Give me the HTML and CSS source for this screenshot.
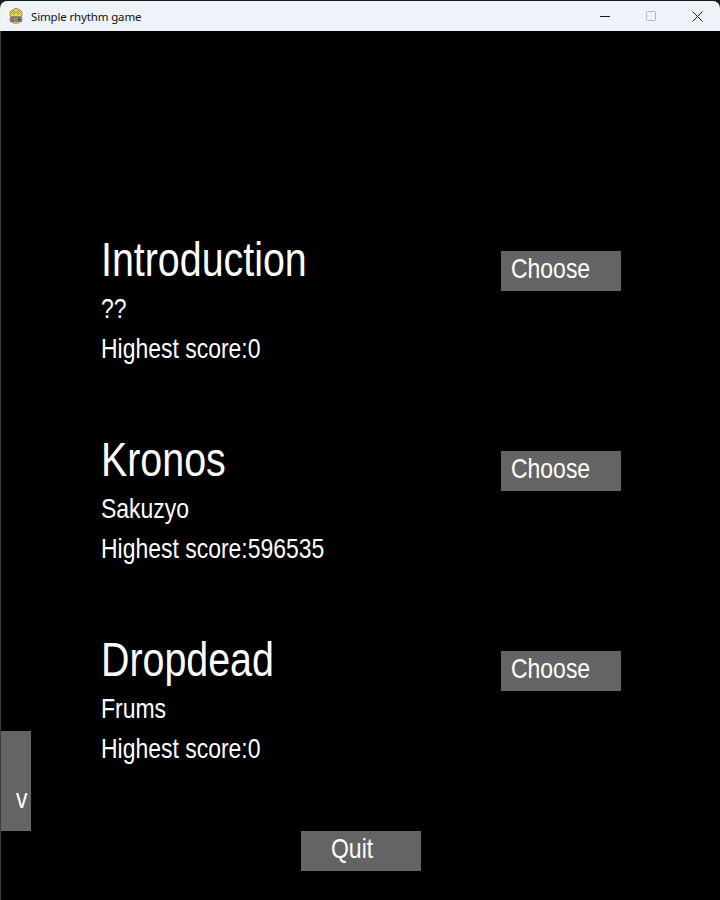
FILE: index.html
```html
<!DOCTYPE html>
<html lang="en">
<head>
<meta charset="utf-8">
<title>Simple rhythm game</title>
<link rel="stylesheet" href="styles.css">
</head>
<body>
<div class="window">
  <header class="titlebar">
    <svg class="app-icon" width="16" height="17" viewBox="0 0 16 17">
      <path d="M3 9 C1 6 2 2 5 2 C6 0 10 0 11 2 C14 2 15 6 13 9 Z" fill="#f2d53c" stroke="#8a7410" stroke-width="0.8"/>
      <circle cx="5.5" cy="4.5" r="1.6" fill="#fff" stroke="#555" stroke-width="0.5"/>
      <circle cx="10.5" cy="4.5" r="1.6" fill="#fff" stroke="#555" stroke-width="0.5"/>
      <circle cx="5.7" cy="4.6" r="0.6" fill="#222"/>
      <circle cx="10.3" cy="4.6" r="0.6" fill="#222"/>
      <rect x="2" y="9" width="12" height="5" rx="2" fill="#8c8c8c" stroke="#444" stroke-width="0.6"/>
      <circle cx="5" cy="11.5" r="1.1" fill="#d33"/>
      <circle cx="11" cy="11.5" r="1.1" fill="#333"/>
      <path d="M4 14 C5 16 11 16 12 14" fill="#f2d53c" stroke="#8a7410" stroke-width="0.6"/>
    </svg>
    <span class="title">Simple rhythm game</span>
    <div class="controls">
      <span class="ctl">
        <svg width="10" height="10" viewBox="0 0 10 10"><path d="M0 5.5 H10" stroke="#1a1a1a" stroke-width="1"/></svg>
      </span>
      <span class="ctl">
        <svg width="10" height="10" viewBox="0 0 10 10"><rect x="0.5" y="0.5" width="9" height="9" rx="1" fill="none" stroke="#b8b8b8" stroke-width="1"/></svg>
      </span>
      <span class="ctl">
        <svg width="11" height="11" viewBox="0 0 11 11"><path d="M0.5 0.5 L10.5 10.5 M10.5 0.5 L0.5 10.5" stroke="#1a1a1a" stroke-width="1"/></svg>
      </span>
    </div>
  </header>
  <main class="screen">
    <section class="songs">
      <div class="song">
        <div class="info">
          <div class="name"><span class="narrow">Introduction</span></div>
          <div class="artist"><span class="narrow">??</span></div>
          <div class="score"><span class="narrow">Highest score:0</span></div>
        </div>
        <div class="btn choose"><span class="narrow">Choose</span></div>
      </div>
      <div class="song">
        <div class="info">
          <div class="name"><span class="narrow">Kronos</span></div>
          <div class="artist"><span class="narrow">Sakuzyo</span></div>
          <div class="score"><span class="narrow">Highest score:596535</span></div>
        </div>
        <div class="btn choose"><span class="narrow">Choose</span></div>
      </div>
      <div class="song">
        <div class="info">
          <div class="name"><span class="narrow">Dropdead</span></div>
          <div class="artist"><span class="narrow">Frums</span></div>
          <div class="score"><span class="narrow">Highest score:0</span></div>
        </div>
        <div class="btn choose"><span class="narrow">Choose</span></div>
      </div>
    </section>
    <div class="footer">
      <div class="btn quit"><span class="narrow">Quit</span></div>
    </div>
    <div class="btn scroll"><span class="narrow">v</span></div>
  </main>
</div>
</body>
</html>
```

FILE: styles.css
```css
* { box-sizing: border-box; }
html, body {
  margin: 0;
  padding: 0;
  background: #1c1c1c;
}
.window {
  width: 720px;
  height: 900px;
  padding-top: 1px;
  display: flex;
  flex-direction: column;
  overflow: hidden;
}
.titlebar {
  height: 30px;
  flex: none;
  background: #eef2f9;
  border-radius: 7px 7px 0 0;
  display: flex;
  align-items: center;
  padding-left: 8px;
  font-family: "Noto Sans", "Open Sans", sans-serif;
  font-size: 11.5px;
  letter-spacing: -0.15px;
  color: #111;
}
.app-icon {
  flex: none;
}
.title {
  margin-left: 7px;
}
.controls {
  margin-left: auto;
  display: flex;
  height: 30px;
}
.ctl {
  width: 46px;
  height: 30px;
  display: flex;
  align-items: center;
  justify-content: center;
}
.ctl svg { display: block; }
.screen {
  flex: 1;
  position: relative;
  background: #000;
  border-left: 1px solid #3c3c3c;
  font-family: "Liberation Sans", Arial, sans-serif;
  color: #fff;
}
.narrow {
  display: inline-block;
  transform: scaleX(0.82);
  transform-origin: 0 0;
}
.songs {
  padding-top: 205px;
  display: flex;
  flex-direction: column;
  gap: 73px;
}
.song {
  display: flex;
  align-items: flex-start;
  padding-left: 100px;
}
.info {
  width: 400px;
  display: flex;
  flex-direction: column;
}
.name {
  font-size: 48px;
  line-height: 48px;
  height: 48px;
  white-space: nowrap;
}
.artist {
  font-size: 28px;
  line-height: 28px;
  height: 28px;
  margin-top: 11px;
  white-space: nowrap;
}
.score {
  font-size: 28px;
  line-height: 28px;
  height: 28px;
  margin-top: 12px;
  white-space: nowrap;
}
.btn {
  background: #646464;
  color: #fff;
  font-size: 28px;
  line-height: 28px;
  white-space: nowrap;
}
.choose {
  width: 120px;
  height: 40px;
  margin-top: 15px;
  padding: 4px 0 0 10px;
}
.footer {
  display: flex;
  padding-left: 300px;
  margin-top: 68px;
}
.quit {
  width: 120px;
  height: 40px;
  padding: 4px 0 0 30px;
}
.scroll {
  position: absolute;
  left: 0;
  top: 700px;
  width: 30px;
  height: 100px;
  padding: 54px 0 0 15px;
}
```
